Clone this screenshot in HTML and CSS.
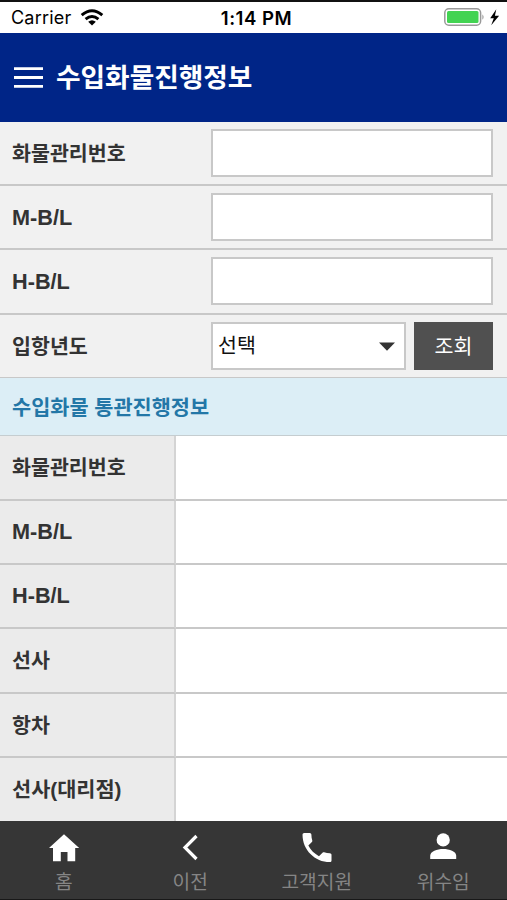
FILE: index.html
```html
<!DOCTYPE html>
<html lang="ko">
<head>
<meta charset="utf-8">
<title>수입화물진행정보</title>
<link rel="stylesheet" href="styles.css">
</head>
<body>
<div class="status">
  <div class="carrier"><span>Carrier</span>
    <svg class="wifi" width="24" height="17" viewBox="0 0 24 17"><g fill="none" stroke="#000" stroke-width="3"><path d="M1.7 6.2Q12 -2.6 22.3 6.2"/><path d="M5.6 10.2Q12 4.8 18.4 10.2"/></g><path d="M8.2 12.8Q12 9.8 15.8 12.8L12 16.5z"/></svg>
  </div>
  <div class="time">1:14 PM</div>
  <div class="power">
    <svg width="56" height="19" viewBox="0 0 56 19"><rect x=".8" y=".8" width="35.8" height="16.4" rx="4" fill="#fff" stroke="#999" stroke-width="1.5"/><rect x="3" y="3" width="31.5" height="12" rx="1.5" fill="#42d352"/><path d="M38.4 6.2q2.4 2.8 0 5.6z" fill="#999"/><path d="M52.3 1.2L46.2 10.3h3.6L47.2 17.2l7.9-9.4h-4.2z"/></svg>
  </div>
</div>
<header class="header">
  <svg width="29" height="21" viewBox="0 0 29 21"><path d="M0 1.7h29M0 10.5h29M0 19.3h29" stroke="#fff" stroke-width="2.8"/></svg>
  <h1>수입화물진행정보</h1>
</header>
<form class="search">
  <div class="field"><label for="cargo">화물관리번호</label><input id="cargo" type="text"></div>
  <div class="field"><label class="latin" for="mbl">M-B/L</label><input id="mbl" type="text"></div>
  <div class="field"><label class="latin" for="hbl">H-B/L</label><input id="hbl" type="text"></div>
  <div class="field last"><span class="label">입항년도</span>
    <div class="select"><span>선택</span><svg width="16" height="9" viewBox="0 0 16 9"><path d="M0 .5h16L8 8.7z" fill="#333"/></svg></div>
    <button type="button">조회</button>
  </div>
</form>
<h2 class="section">수입화물 통관진행정보</h2>
<dl class="details">
  <dt>화물관리번호</dt><dd></dd>
  <dt class="latin">M-B/L</dt><dd></dd>
  <dt class="latin">H-B/L</dt><dd></dd>
  <dt>선사</dt><dd></dd>
  <dt>항차</dt><dd></dd>
  <dt class="agent">선사(대리점)</dt><dd></dd>
</dl>
<nav class="tabs">
  <div class="tab"><svg width="32" height="30" viewBox="0 0 32 30"><path fill="#fff" d="M16 1.2L31.2 15H27.2V28.3H19.5V19H12.8V28.3H5V15H1z"/></svg><span>홈</span></div>
  <div class="tab"><svg width="32" height="30" viewBox="0 0 32 30"><path d="M22.5 3L11 14.5L22.5 26" fill="none" stroke="#fff" stroke-width="3.2"/></svg><span>이전</span></div>
  <div class="tab"><svg width="32" height="30" viewBox="0 0 32 30"><path transform="translate(-3.3 -4.8) scale(1.61 1.61)" fill="#fff" d="M6.62 10.79c1.44 2.83 3.76 5.14 6.59 6.59l2.2-2.2c.27-.27.67-.36 1.02-.24 1.12.37 2.33.57 3.57.57.55 0 1 .45 1 1V20c0 .55-.45 1-1 1-9.39 0-17-7.61-17-17 0-.55.45-1 1-1h3.5c.55 0 1 .45 1 1 0 1.25.2 2.45.57 3.57.11.35.03.74-.25 1.02z"/></svg><span>고객지원</span></div>
  <div class="tab"><svg width="32" height="30" viewBox="0 0 32 30"><g fill="#fff"><circle cx="16.2" cy="6.9" r="6.6"/><path d="M3.2 26v-3.2C3.2 18.3 10 16 16.2 16s13 2.3 13 6.8V26z"/></g></svg><span>위수임</span></div>
</nav>
</body>
</html>
```
FILE: styles.css
```css
* { box-sizing: border-box; }
body {
  margin: 0;
  width: 507px;
  height: 900px;
  overflow: hidden;
  display: flex;
  flex-direction: column;
  background: #fff;
  color: #333;
  font-family: "Liberation Sans", "Noto Sans CJK KR", sans-serif;
  font-size: 20.6px;
}
svg { display: block; }
.status {
  flex: 0 0 33px;
  border-top: 2px solid #111;
  padding: 0 7px 0 11px;
  display: grid;
  grid-template-columns: 1fr auto 1fr;
  align-items: center;
  color: #000;
  font-family: Inter, sans-serif;
  font-size: 18px;
  line-height: 30px;
}
.carrier { display: flex; align-items: center; gap: 9px; letter-spacing: .2px; }
.carrier span { padding-top: 1px; }
.time { font-weight: 600; padding-left: 2px; font-size: 18.6px; letter-spacing: .5px; }
.power { justify-self: end; }
.power svg { margin-top: -1px; }
.header {
  flex: 0 0 89px;
  display: flex;
  align-items: center;
  gap: 13px;
  padding: 0 0 1px 14px;
  background: #002587;
}
h1 { margin: 1px 0 0; color: #fff; font-size: 26.7px; line-height: 40px; font-weight: 700; }
.search {
  margin: 0;
  display: grid;
  grid-template-rows: 64px 64px 65px 63px;
  background: #f1f1f1;
}
.field {
  display: flex;
  align-items: flex-start;
  padding: 7px 14px 0 12px;
  border-bottom: 2px solid #c8c8c8;
}
.field.last { border-bottom-width: 1px; }
.field label, .label { width: 199px; line-height: 50px; font-weight: 700; }
.field .latin { line-height: 49px; }
.latin { font-size: 21.7px; }
.field input, .select {
  height: 48px;
  border: 2px solid #c8c8c8;
  background: #fff;
  flex: 1;
  min-width: 0;
  padding: 0 5px;
}
.select { display: flex; align-items: center; justify-content: space-between; color: #111; padding-right: 9px; line-height: 42px; }
.select span { margin-top: -1px; }
button {
  width: 79px;
  height: 48px;
  margin-left: 8px;
  padding: 0 0 3px;
  border: 0;
  background: #505050;
  color: #fff;
  font: inherit;
}
.section {
  margin: 0;
  flex: 0 0 58px;
  padding: 2px 0 0 12px;
  border-bottom: 1px solid #c5cdd0;
  background: #dceef6;
  color: #2377a7;
  font-size: 20.8px;
  line-height: 55px;
  font-weight: 700;
}
.details {
  margin: 0;
  display: grid;
  grid-template-columns: 176px 1fr;
  grid-template-rows: 65px 64px 64px 65px 64px 63px;
}
dt {
  padding-left: 12px;
  line-height: 64px;
  background: #ebebeb;
  border-right: 2px solid #d4d4d4;
  border-bottom: 2px solid #c8c8c8;
  font-weight: 700;
}
dt.latin { line-height: 62px; }
dt.agent { font-size: 20.8px; }
dd { margin: 0; border-bottom: 2px solid #c8c8c8; }
dt:nth-last-of-type(1), dd:nth-last-of-type(1) { border-bottom: 0; }
.tabs {
  flex: 0 0 79px;
  margin-top: auto;
  display: grid;
  grid-template-columns: repeat(4, 126.5px);
  background: #363636;
  border-bottom: 1px solid #181818;
}
.tab { display: flex; flex-direction: column; align-items: center; padding: 12px 0 0 1px; color: #858585; font-size: 19.2px; line-height: 32px; }
.tab span { margin-top: 4px; }
```
